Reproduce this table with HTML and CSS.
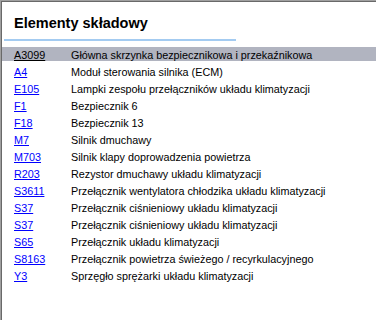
FILE: index.html
```html
<!DOCTYPE html>
<html lang="pl">
<head>
<meta charset="utf-8">
<title>Elementy składowy</title>
<link rel="stylesheet" href="styles.css">
</head>
<body>
<div class="frame">
  <h1 class="title">Elementy składowy</h1>
  <div class="rule"></div>
  <ul class="list">
    <li class="row selected"><a class="code" href="#">A3099</a><span class="desc">Główna skrzynka bezpiecznikowa i przekaźnikowa</span></li>
    <li class="row"><a class="code" href="#">A4</a><span class="desc">Moduł sterowania silnika (ECM)</span></li>
    <li class="row"><a class="code" href="#">E105</a><span class="desc">Lampki zespołu przełączników układu klimatyzacji</span></li>
    <li class="row"><a class="code" href="#">F1</a><span class="desc">Bezpiecznik 6</span></li>
    <li class="row"><a class="code" href="#">F18</a><span class="desc">Bezpiecznik 13</span></li>
    <li class="row"><a class="code" href="#">M7</a><span class="desc">Silnik dmuchawy</span></li>
    <li class="row"><a class="code" href="#">M703</a><span class="desc">Silnik klapy doprowadzenia powietrza</span></li>
    <li class="row"><a class="code" href="#">R203</a><span class="desc">Rezystor dmuchawy układu klimatyzacji</span></li>
    <li class="row"><a class="code" href="#">S3611</a><span class="desc">Przełącznik wentylatora chłodzika układu klimatyzacji</span></li>
    <li class="row"><a class="code" href="#">S37</a><span class="desc">Przełącznik ciśnieniowy układu klimatyzacji</span></li>
    <li class="row"><a class="code" href="#">S37</a><span class="desc">Przełącznik ciśnieniowy układu klimatyzacji</span></li>
    <li class="row"><a class="code" href="#">S65</a><span class="desc">Przełącznik układu klimatyzacji</span></li>
    <li class="row"><a class="code" href="#">S8163</a><span class="desc">Przełącznik powietrza świeżego / recyrkulacyjnego</span></li>
    <li class="row"><a class="code" href="#">Y3</a><span class="desc">Sprzęgło sprężarki układu klimatyzacji</span></li>
  </ul>
</div>
</body>
</html>
```

FILE: styles.css
```css
html, body {
  margin: 0;
  padding: 0;
  background: #ffffff;
}

body {
  width: 376px;
  height: 320px;
  overflow: hidden;
  font-family: "Liberation Sans", Arial, sans-serif;
  color: #000000;
}

.frame {
  box-sizing: border-box;
  height: 320px;
  border-left: 1px solid #a0a0a0;
  border-top: 1px solid #a0a0a0;
  box-shadow: inset 1px 1px 0 #696969;
  padding-top: 2px;
  padding-left: 1px;
  background: #ffffff;
}

.title {
  margin: 0;
  padding: 11px 0 0 12px;
  font-size: 14.5px;
  font-weight: bold;
  line-height: 18px;
}

.rule {
  margin: 7px 0 0 2px;
  width: 232px;
  height: 2px;
  background: #a3cbf1;
}

.list {
  list-style: none;
  margin: 6px 0 0 0;
  padding: 0;
}

.row {
  display: flex;
  height: 14px;
  margin-bottom: 3px;
  padding-left: 12px;
  font-size: 10.8px;
  line-height: 16px;
  white-space: nowrap;
}

.row.selected {
  background: #b1b4c0;
}

.code {
  flex: 0 0 57px;
  color: #0000ff;
  text-decoration: underline;
}

.row.selected .code {
  color: #000000;
}

.desc {
  color: #000000;
}
```
